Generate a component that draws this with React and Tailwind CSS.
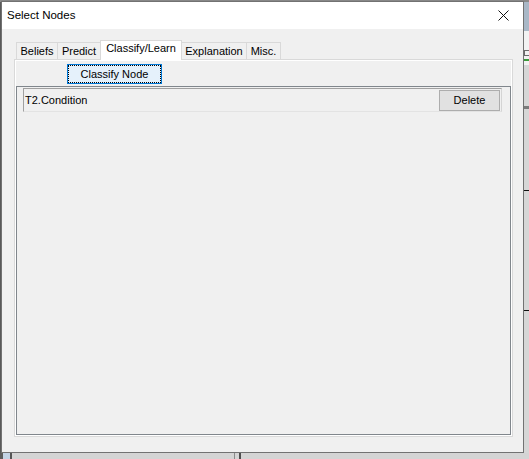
const ui = { fontFamily: '"Liberation Sans", Arial, sans-serif' };

const tabs = [
  { label: "Beliefs", w: "w-[41px]", edge: "border-l" },
  { label: "Predict", w: "w-[43px]", edge: "border-l" },
  { label: "Classify/Learn", w: "w-[82px]", active: true },
  { label: "Explanation", w: "w-[65px]", edge: "border-r" },
  { label: "Misc.", w: "w-[34px]", edge: "border-r" },
];

function CloseGlyph() {
  return (
    <svg width="11" height="11" viewBox="0 0 11 11" className="block">
      <path d="M0.5 0.5 L10.5 10.5 M10.5 0.5 L0.5 10.5" stroke="#111" strokeWidth="1" fill="none" />
    </svg>
  );
}

function TabStrip() {
  return (
    <div className="flex items-end h-[19px] pl-[2px] relative z-10">
      {tabs.map((t) =>
        t.active ? (
          <div
            key={t.label}
            className={`${t.w} h-[20px] -mb-[1px] bg-white border border-b-0 border-[#d9d9d9] flex justify-center pt-[1px] text-[11px] leading-[13px] text-black`}
          >
            {t.label}
          </div>
        ) : (
          <div
            key={t.label}
            className={`${t.w} h-[17px] bg-[#f0f0f0] border-t ${t.edge} border-[#d9d9d9] flex items-center justify-center text-[11px] text-black`}
          >
            {t.label}
          </div>
        )
      )}
    </div>
  );
}

function NodeRow({ name }) {
  return (
    <div className="ml-[6px] w-[479px] h-[24px] border border-t-[#a0a0a0] border-l-[#a0a0a0] border-b-[#e3e3e3] border-r-[#d4d4d4] flex items-start justify-between">
      <span className="pl-[1px] text-[11px] leading-[22px] text-black">{name}</span>
      <button className="mt-[1px] mr-[1px] w-[61px] h-[21px] bg-[#e1e1e1] border border-[#adadad] text-[11px] text-black flex items-center justify-center">
        Delete
      </button>
    </div>
  );
}

// strip of the app window that shows to the right of the dialog
function RightEdge() {
  return (
    <div className="w-[5px] flex flex-col bg-[#d6d6d6]">
      <div className="h-[29px] bg-[#a9b8c7]" />
      <div className="h-[19px] bg-[#f2f2f2]" />
      <div className="h-[6px] border border-r-0 border-[#6a6a6a] bg-[#f2f2f2]" />
      <div className="h-[3px] bg-[#f2f2f2]" />
      <div className="h-[2px] bg-[#3a9a3a]" />
      <div className="h-[4px] bg-[#f2f2f2]" />
      <div className="h-[41px]" />
      <div className="h-[3px] bg-[#7a7a7a]" />
      <div className="h-[81px]" />
      <div className="h-[1px] bg-[#111]" />
      <div className="h-[119px]" />
      <div className="h-[1px] bg-[#111]" />
    </div>
  );
}

function BottomEdge() {
  return (
    <div className="h-[6px] flex bg-[#d4d4d4]">
      <div className="w-[3px] bg-[#5c5c5c]" />
      <div className="w-[7px] bg-[#c3d3e4]" />
      <div className="w-[2px] bg-[#555]" />
      <div className="w-[222px]" />
      <div className="w-[1px] bg-[#8a8a8a]" />
      <div className="w-[4px]" />
      <div className="w-[2px] bg-[#4e4e4e]" />
    </div>
  );
}

export default function App() {
  return (
    <div className="w-[529px] h-[459px] overflow-hidden bg-[#d6d6d6] flex flex-col" style={ui}>
      <div className="h-[453px] flex border-t-2 border-[#8c8c8c]">
        <div className="w-[1px] bg-[#5c5c5c]" />

        {/* dialog window */}
        <div className="w-[523px] -mt-[1px] border border-[#727272] bg-[#f0f0f0] flex flex-col shadow-[2px_2px_4px_rgba(0,0,0,0.25)]">
          <div className="h-[27px] shrink-0 bg-white flex items-center justify-between pl-[5px] pr-[14px]">
            <span className="text-[11.5px] text-black">Select Nodes</span>
            <CloseGlyph />
          </div>

          <div className="pt-[11px] pl-[12px]">
            <TabStrip />
            <div className="w-[499px] h-[378px] border border-[#d9d9d9] bg-white p-[1px]">
              <div className="h-full bg-[#f0f0f0] flex flex-col">
                <button className="mt-[3px] ml-[51px] w-[95px] h-[20px] border border-[#0078d7] bg-[#e5f1fb] p-0 shrink-0">
                  <div className="w-full h-full border border-dotted border-black flex items-center justify-center text-[11px] text-black">
                    Classify Node
                  </div>
                </button>
                <div className="mt-[2px] flex-1 border border-[#80868c] pt-[1px]">
                  <NodeRow name="T2.Condition" />
                </div>
              </div>
            </div>
          </div>
        </div>

        <RightEdge />
      </div>
      <BottomEdge />
    </div>
  );
}
